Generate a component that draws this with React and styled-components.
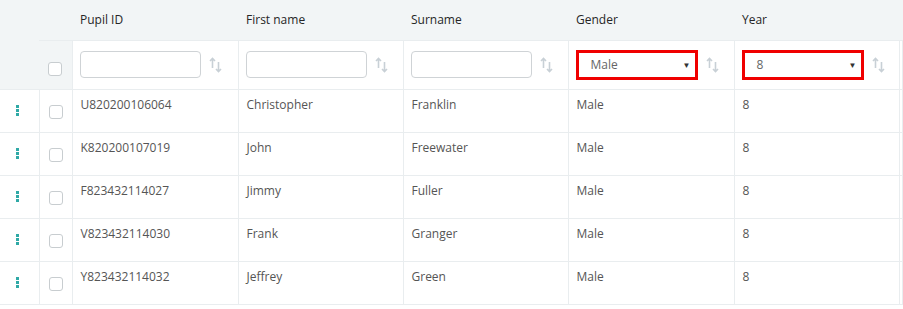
import React from "react";
import styled, { createGlobalStyle } from "styled-components";

const GlobalStyle = createGlobalStyle`
  body {
    margin: 0;
    background: #fff;
    font-family: "Open Sans", "Liberation Sans", sans-serif;
  }
`;

const Table = styled.table`
  border-collapse: collapse;
  table-layout: fixed;
  width: 903px;
  font-size: 12px;
  color: #555;
`;

const HeadRow = styled.tr`
  height: 40px;
  background: #f2f5f6;
`;

const FilterRow = styled.tr`
  height: 49px;
`;

const DataRow = styled.tr`
  height: 43px;
`;

const HeadCell = styled.th`
  padding: 0 0 0 8px;
  text-align: left;
  font-weight: 500;
  color: #262626;
  border-bottom: 1px solid #e9edef;
`;

const CornerCell = styled.td`
  background: #f2f5f6;
  padding: 0;
  border-bottom: 1px solid #e9edef;
`;

const FilterCell = styled.td`
  padding: 0 0 0 7px;
  border-right: 1px solid #e9edef;
  border-bottom: 1px solid #e9edef;
`;

const CheckCell = styled.td`
  padding: 0;
  text-align: center;
  background: ${(p) => (p.$grey ? "#f2f5f6" : "#fff")};
  border-right: 1px solid #e9edef;
  border-bottom: 1px solid #e9edef;
  vertical-align: middle;
  padding-top: ${(p) => (p.$grey ? "6px" : "0")};
`;

const MenuCell = styled.td`
  padding: 0;
  border-right: 1px solid #e9edef;
  border-bottom: 1px solid #e9edef;
  vertical-align: middle;
`;

const Cell = styled.td`
  padding: 6px 0 0 8px;
  vertical-align: top;
  line-height: 17px;
  border-right: 1px solid #e9edef;
  border-bottom: 1px solid #e9edef;
`;

const Box = styled.span`
  display: inline-block;
  width: 12px;
  height: 12px;
  border: 1px solid #c8cdd0;
  border-radius: 3px;
  background: #fff;
  vertical-align: middle;
`;

const Kebab = styled.div`
  display: flex;
  flex-direction: column;
  gap: 1.5px;
  width: 3px;
  margin-left: 16px;
  span {
    display: block;
    width: 3px;
    height: 2.5px;
    background: #2fa9a6;
  }
`;

const FilterWrap = styled.div`
  display: flex;
  align-items: center;
  gap: 8px;
`;

const TextInput = styled.div`
  width: 119px;
  height: 25px;
  border: 1px solid #cfd3d6;
  border-radius: 4px;
  background: #fff;
`;

const Select = styled.div`
  box-sizing: border-box;
  width: 122px;
  height: 30px;
  border: 3px solid #f00000;
  display: flex;
  align-items: center;
  justify-content: space-between;
  padding: 0 4px 0 ${(p) => p.$pad || 12}px;
  color: #666;
  font-size: 12px;
  background: #fff;
`;

const Caret = styled.span`
  font-size: 8px;
  color: #333;
`;

const SortIcon = () => (
  <svg width="13" height="16" viewBox="0 0 13 16" fill="none" stroke="#c8d0d6" strokeWidth="1.6">
    <path d="M3.5 11V1.5M1 4l2.5-2.5L6 4" />
    <path d="M9.5 5v9.5M7 12l2.5 2.5L12 12" />
  </svg>
);

const columns = ["Pupil ID", "First name", "Surname", "Gender", "Year"];

const pupils = [
  ["U820200106064", "Christopher", "Franklin", "Male", "8"],
  ["K820200107019", "John", "Freewater", "Male", "8"],
  ["F823432114027", "Jimmy", "Fuller", "Male", "8"],
  ["V823432114030", "Frank", "Granger", "Male", "8"],
  ["Y823432114032", "Jeffrey", "Green", "Male", "8"],
];

export default function App() {
  return (
    <>
      <GlobalStyle />
      <Table>
        <colgroup>
          <col style={{ width: 39 }} />
          <col style={{ width: 33 }} />
          <col style={{ width: 166 }} />
          <col style={{ width: 165 }} />
          <col style={{ width: 165 }} />
          <col style={{ width: 166 }} />
          <col style={{ width: 165 }} />
          <col />
        </colgroup>
        <thead>
          <HeadRow>
            <CornerCell rowSpan={2} />
            <HeadCell />
            {columns.map((c) => (
              <HeadCell key={c}>{c}</HeadCell>
            ))}
            <HeadCell />
          </HeadRow>
          <FilterRow>
            <CheckCell $grey>
              <Box />
            </CheckCell>
            {[0, 1, 2].map((i) => (
              <FilterCell key={i}>
                <FilterWrap>
                  <TextInput />
                  <SortIcon />
                </FilterWrap>
              </FilterCell>
            ))}
            <FilterCell>
              <FilterWrap>
                <Select $pad={12}>
                  Male <Caret>▼</Caret>
                </Select>
                <SortIcon />
              </FilterWrap>
            </FilterCell>
            <FilterCell>
              <FilterWrap>
                <Select $pad={12}>
                  8 <Caret>▼</Caret>
                </Select>
                <SortIcon />
              </FilterWrap>
            </FilterCell>
            <FilterCell />
          </FilterRow>
        </thead>
        <tbody>
          {pupils.map((p) => (
            <DataRow key={p[0]}>
              <MenuCell>
                <Kebab>
                  <span />
                  <span />
                  <span />
                </Kebab>
              </MenuCell>
              <CheckCell>
                <Box />
              </CheckCell>
              {p.map((v, i) => (
                <Cell key={i}>{v}</Cell>
              ))}
              <Cell />
            </DataRow>
          ))}
        </tbody>
      </Table>
    </>
  );
}
